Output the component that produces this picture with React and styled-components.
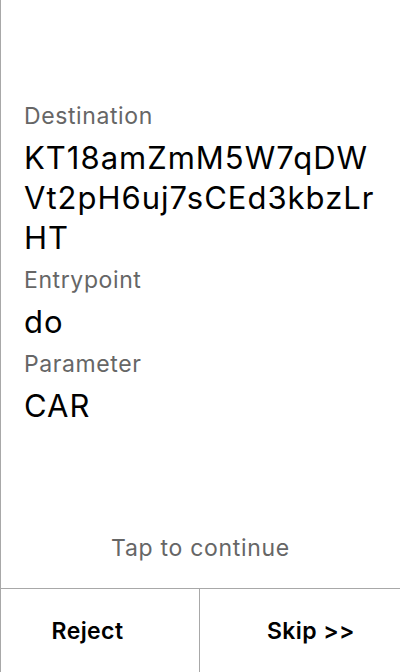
import React from "react";
import styled, { createGlobalStyle } from "styled-components";

const Global = createGlobalStyle`
  html, body { margin: 0; padding: 0; background: #fff; }
  body { font-family: Inter, "Noto Sans", sans-serif; }
  * { box-sizing: border-box; }
`;

const Screen = styled.div`
  width: 400px;
  height: 672px;
  display: flex;
  flex-direction: column;
  border-left: 1px solid #a8a8a8;
  background: #fff;
`;

const Main = styled.div`
  flex: 1;
  display: flex;
  flex-direction: column;
  justify-content: center;
  padding: 0 23px 8px;
`;

const Label = styled.div`
  font-size: 23px;
  line-height: 44px;
  letter-spacing: 0.6px;
  color: #666;
`;

const Value = styled.div`
  font-size: 31px;
  line-height: 40px;
  letter-spacing: 1px;
  color: #000;
  word-break: break-all;
`;

const Hint = styled.div`
  text-align: center;
  font-size: 23px;
  line-height: 28px;
  letter-spacing: 0.7px;
  color: #666;
  padding: 6px 0 26px;
`;

const Actions = styled.div`
  display: grid;
  grid-template-columns: 198px 1fr;
  height: 84px;
  border-top: 1px solid #a8a8a8;
`;

const Action = styled.button`
  display: flex;
  align-items: center;
  justify-content: center;
  background: none;
  border: none;
  margin: 0;
  font-family: inherit;
  font-size: 23px;
  font-weight: 600;
  letter-spacing: 0.4px;
  color: #000;
  padding: 0 ${(p) => (p.$side === "left" ? "25px" : "0")} 0 ${(p) => (p.$side === "right" ? "22px" : "0")};
  border-left: ${(p) => (p.$side === "right" ? "1px solid #a8a8a8" : "none")};
`;

export default function App() {
  return (
    <>
      <Global />
      <Screen>
        <Main>
          <Label>Destination</Label>
          <Value>KT18amZmM5W7qDWVt2pH6uj7sCEd3kbzLrHT</Value>
          <Label>Entrypoint</Label>
          <Value>do</Value>
          <Label>Parameter</Label>
          <Value>CAR</Value>
        </Main>
        <Hint>Tap to continue</Hint>
        <Actions>
          <Action $side="left">Reject</Action>
          <Action $side="right">Skip &gt;&gt;</Action>
        </Actions>
      </Screen>
    </>
  );
}
